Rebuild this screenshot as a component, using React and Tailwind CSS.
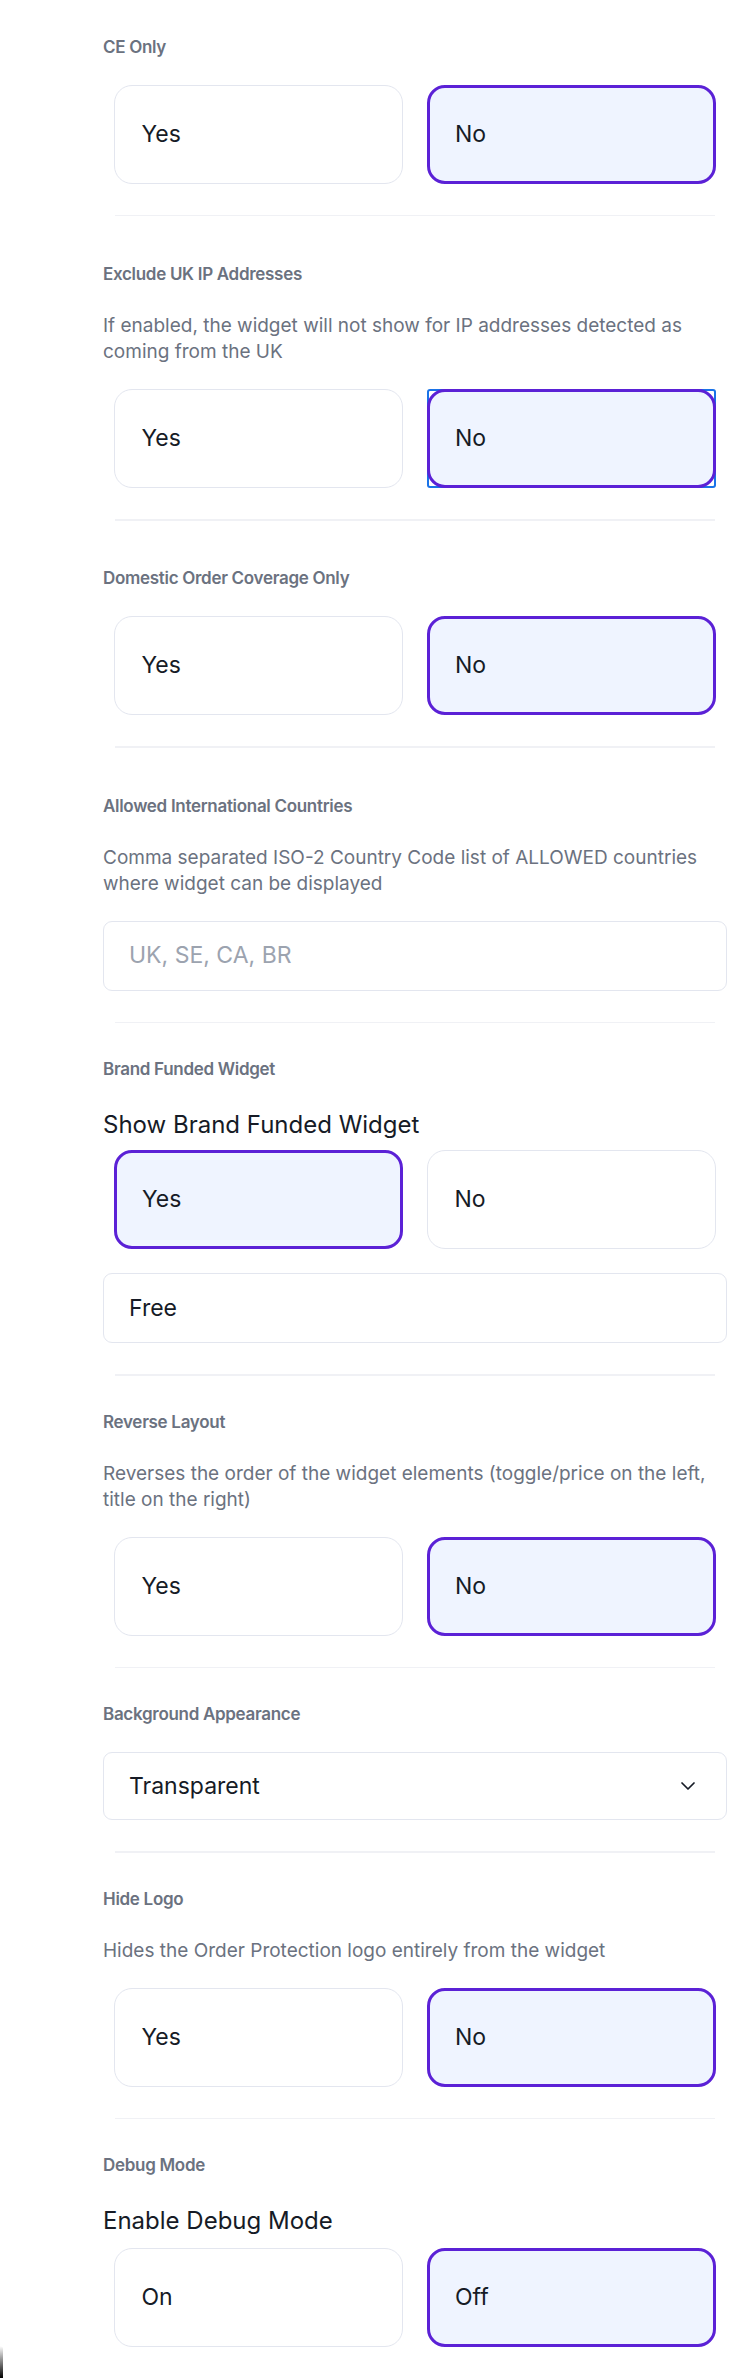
import { ChevronDown } from "lucide-react";

const font = { fontFamily: "Inter, 'Noto Sans', sans-serif" };

function Label({ children }) {
  return <p className="text-[17px] font-semibold leading-[27px] tracking-[-0.3px] text-[#6b7280]">{children}</p>;
}

function Hint({ children }) {
  return <p className="text-[19px] leading-[26px] text-[#6b7280]">{children}</p>;
}

function Choice({ label, selected, focused }) {
  const box = selected
    ? "border-[3px] border-[#5b21d6] bg-[#eff4ff] pl-[25px]"
    : "border-[1.5px] border-[#e3e6ef] bg-white pl-[26.5px]";
  const button = (
    <button
      type="button"
      className={`flex h-[99px] w-full items-center rounded-[18px] text-left text-[23px] text-[#161b26] ${box}`}
    >
      {label}
    </button>
  );
  if (!focused) return button;
  return <div className="rounded-[3px] shadow-[inset_0_0_0_2px_#1a73e8]">{button}</div>;
}

function ChoiceRow({ options, value, focused }) {
  return (
    <div className="mx-[11px] grid grid-cols-2 gap-[24px]">
      {options.map((option) => (
        <Choice focused={focused && option === value} key={option} label={option} selected={option === value} />
      ))}
    </div>
  );
}

function Section({ children, top = "pt-[33px]" }) {
  return <section className={`flex flex-col gap-[24px] pb-[31px] ${top}`}>{children}</section>;
}

function Divider() {
  return <div className="mx-[12px] h-[1.5px] bg-[#f0f1f5]" />;
}

function TextBox({ children, muted }) {
  return (
    <div
      className={`flex h-[70px] items-center rounded-[9px] border-[1.5px] border-[#e3e6ef] px-[25px] text-[23px] ${
        muted ? "text-[#9ca3af]" : "text-[#161b26]"
      }`}
    >
      {children}
    </div>
  );
}

export default function App() {
  return (
    <div className="relative min-h-[2378px] w-[750px] overflow-hidden bg-white" style={font}>
      <div className="ml-[103px] w-[624px]">
        <Section top="pt-[33.5px]">
          <Label>CE Only</Label>
          <ChoiceRow options={["Yes", "No"]} value="No" />
        </Section>
        <Divider />

        <Section top="pt-[45px]">
          <div className="flex flex-col gap-[25px]">
            <Label>Exclude UK IP Addresses</Label>
            <Hint>If enabled, the widget will not show for IP addresses detected as coming from the UK</Hint>
          </div>
          <ChoiceRow focused options={["Yes", "No"]} value="No" />
        </Section>
        <Divider />

        <Section top="pt-[44.5px]">
          <Label>Domestic Order Coverage Only</Label>
          <ChoiceRow options={["Yes", "No"]} value="No" />
        </Section>
        <Divider />

        <Section top="pt-[45px]">
          <div className="flex flex-col gap-[25px]">
            <Label>Allowed International Countries</Label>
            <Hint>Comma separated ISO-2 Country Code list of ALLOWED countries where widget can be displayed</Hint>
          </div>
          <TextBox muted>UK, SE, CA, BR</TextBox>
        </Section>
        <Divider />

        <Section>
          <Label>Brand Funded Widget</Label>
          <div className="flex flex-col gap-[7px]">
            <p className="text-[24px] leading-[36px] text-[#161b26]">Show Brand Funded Widget</p>
            <ChoiceRow options={["Yes", "No"]} value="Yes" />
          </div>
          <TextBox>Free</TextBox>
        </Section>
        <Divider />

        <Section>
          <div className="flex flex-col gap-[25px]">
            <Label>Reverse Layout</Label>
            <Hint>Reverses the order of the widget elements (toggle/price on the left, title on the right)</Hint>
          </div>
          <ChoiceRow options={["Yes", "No"]} value="No" />
        </Section>
        <Divider />

        <Section>
          <Label>Background Appearance</Label>
          <div className="flex h-[68px] items-center justify-between rounded-[9px] border-[1.5px] border-[#e3e6ef] pl-[25px] pr-[26px] text-[23px] text-[#161b26]">
            <span>Transparent</span>
            <ChevronDown className="h-[24px] w-[24px] text-[#161b26]" strokeWidth={1.75} />
          </div>
        </Section>
        <Divider />

        <Section>
          <div className="flex flex-col gap-[25px]">
            <Label>Hide Logo</Label>
            <Hint>Hides the Order Protection logo entirely from the widget</Hint>
          </div>
          <ChoiceRow options={["Yes", "No"]} value="No" />
        </Section>
        <Divider />

        <Section>
          <Label>Debug Mode</Label>
          <div className="flex flex-col gap-[9px]">
            <p className="text-[24px] leading-[36px] text-[#161b26]">Enable Debug Mode</p>
            <ChoiceRow options={["On", "Off"]} value="Off" />
          </div>
        </Section>
      </div>
      <div className="absolute bottom-0 left-0 h-[32px] w-[3px] rounded-tr-full bg-gradient-to-b from-transparent to-black" />
    </div>
  );
}
